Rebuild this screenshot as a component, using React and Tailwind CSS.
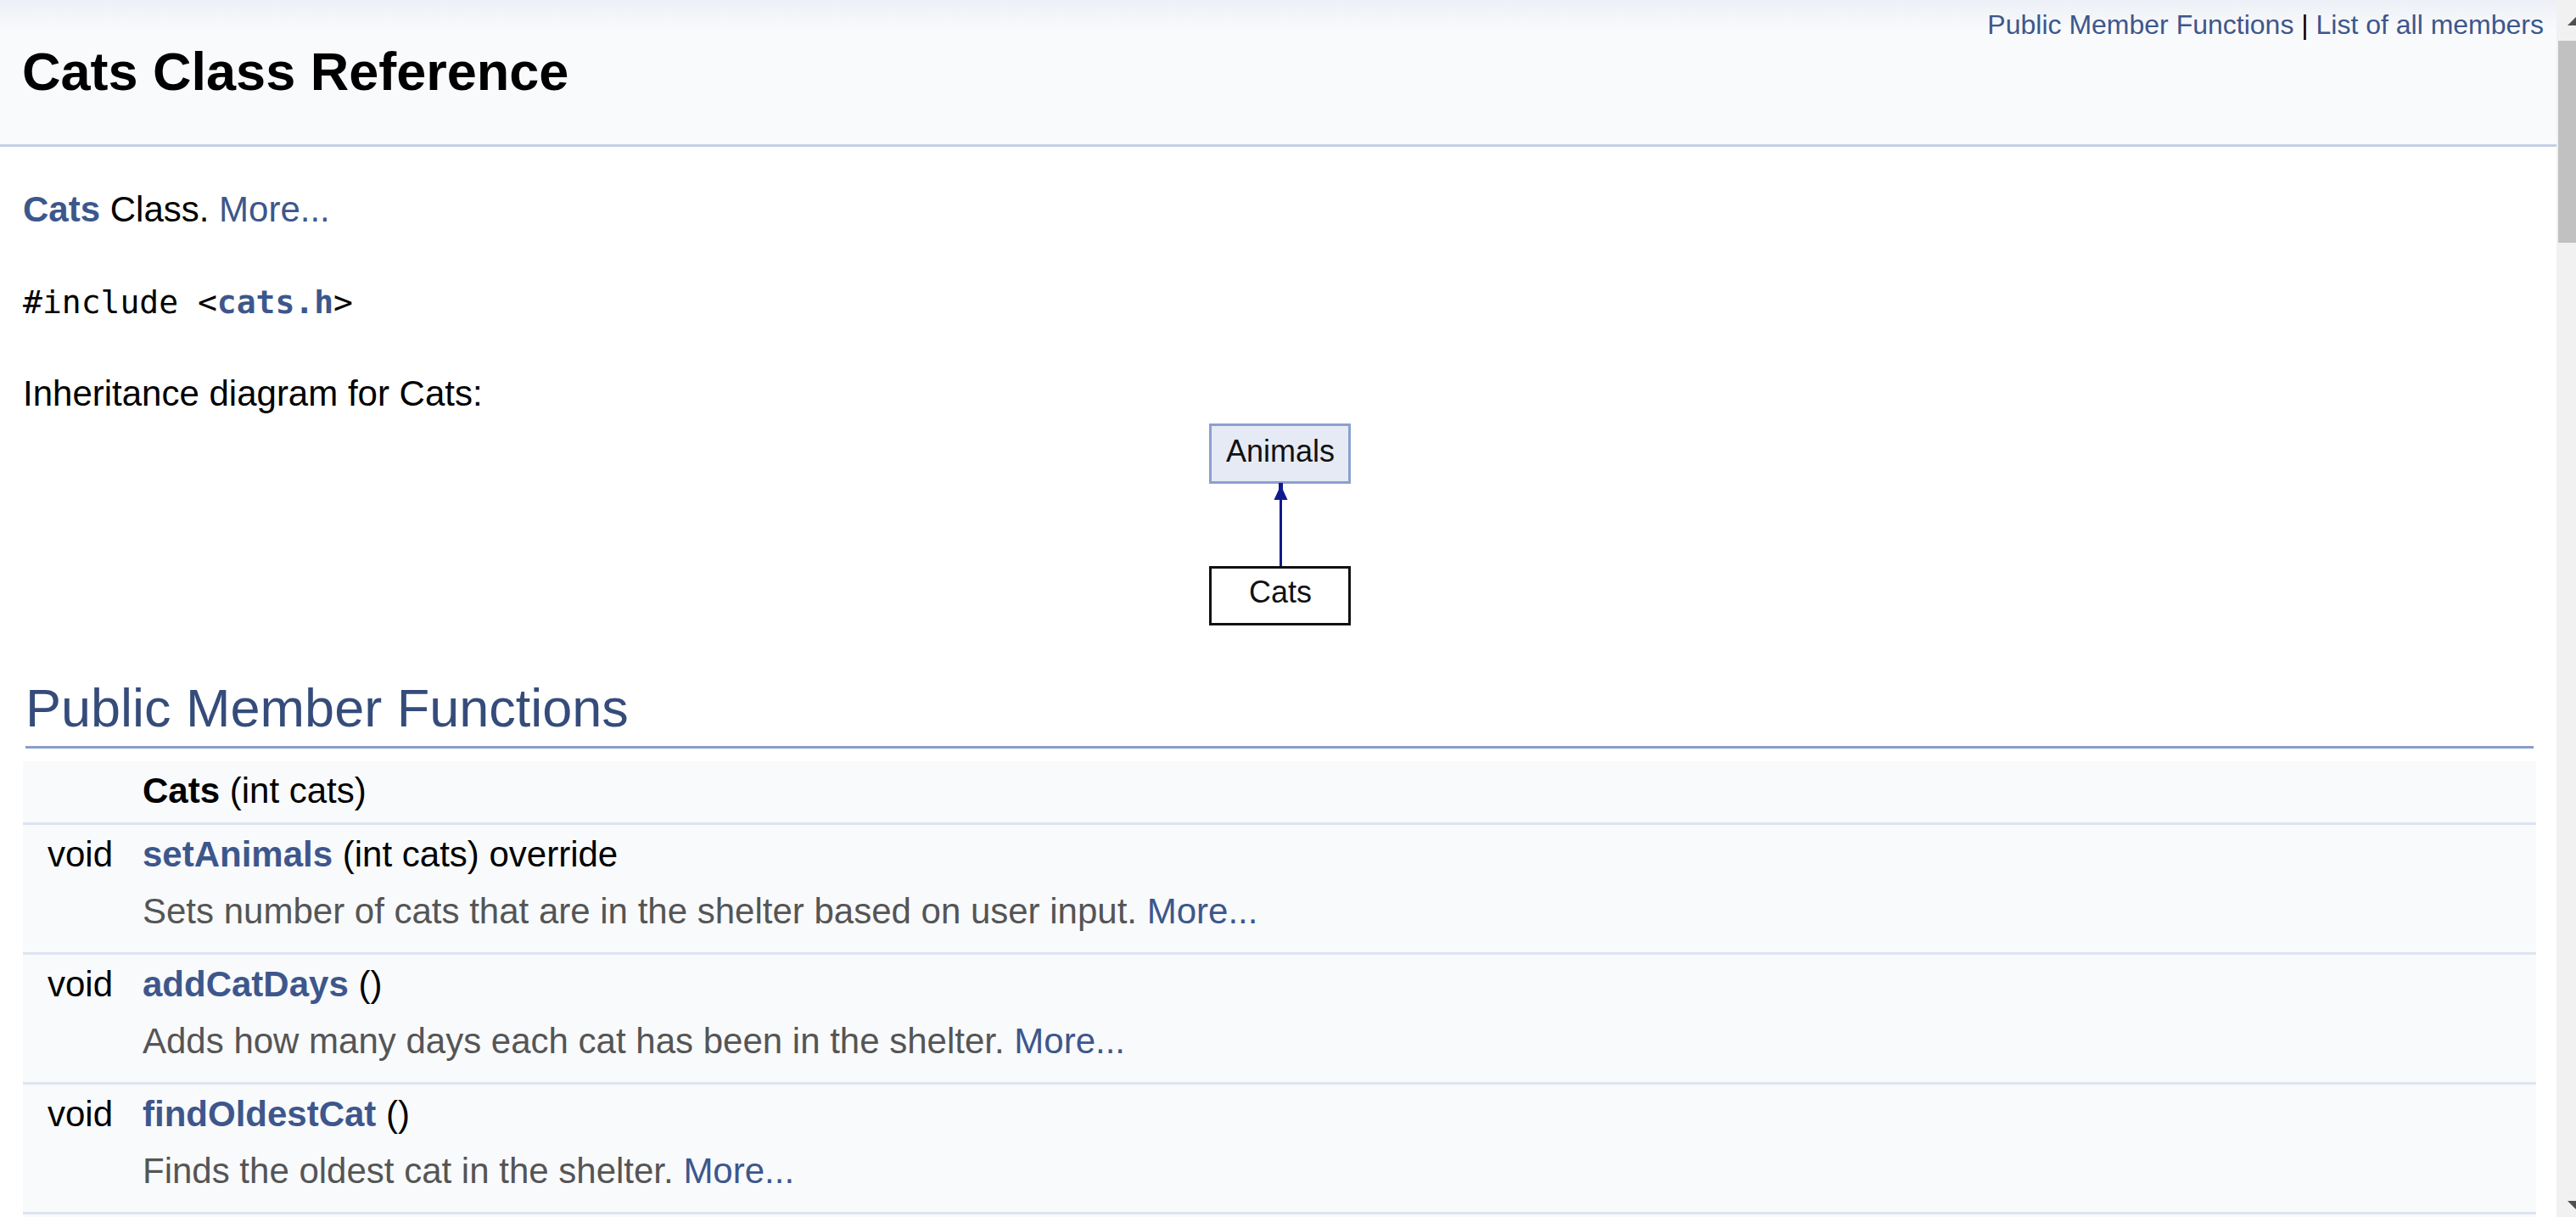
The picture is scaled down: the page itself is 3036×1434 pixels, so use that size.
const members = [
  {
    name: "setAnimals",
    args: " (int cats) override",
    desc: "Sets number of cats that are in the shelter based on user input.",
  },
  {
    name: "addCatDays",
    args: " ()",
    desc: "Adds how many days each cat has been in the shelter.",
  },
  {
    name: "findOldestCat",
    args: " ()",
    desc: "Finds the oldest cat in the shelter.",
  },
];

const link = "text-[#3d578c]";

const Separator = () => <div className="h-[3px] bg-[#dee4f0]"></div>;

const InheritanceDiagram = () => (
  <div className="flex justify-center">
    <svg width="200" height="250" viewBox="0 0 200 250">
      <rect x="18.5" y="3.5" width="164" height="68" fill="#e6eaf5" stroke="#8ca0cf" strokeWidth="3" />
      <text
        x="101"
        y="47"
        textAnchor="middle"
        fontFamily="'Liberation Sans', Arial, sans-serif"
        fontSize="36"
        fill="#111"
      >
        Animals
      </text>
      <line x1="101.5" y1="90" x2="101.5" y2="171" stroke="#111a8c" strokeWidth="3" />
      <polygon points="99,72 104,72 104,80 109.5,92 93.5,92 99,80" fill="#111a8c" />
      <rect x="18.5" y="171.5" width="164" height="67" fill="#fff" stroke="#111" strokeWidth="3" />
      <text
        x="101"
        y="213"
        textAnchor="middle"
        fontFamily="'Liberation Sans', Arial, sans-serif"
        fontSize="36"
        fill="#111"
      >
        Cats
      </text>
    </svg>
  </div>
);

const Scrollbar = () => (
  <div className="flex w-[23px] shrink-0 flex-col bg-[#f1f1f1]">
    <svg width="23" height="48" className="shrink-0">
      <polygon points="13,30 23,20 23,30" fill="#505050" />
    </svg>
    <div className="ml-[2px] h-[238px] shrink-0 bg-[#c1c1c1]"></div>
    <div className="flex-1"></div>
    <svg width="23" height="24" className="shrink-0">
      <polygon points="13,5 23,5 23,15" fill="#505050" />
    </svg>
  </div>
);

export default function App() {
  return (
    <div className="flex h-screen w-full overflow-hidden bg-white font-['Liberation_Sans',Arial,sans-serif] text-[42px] leading-[66px] text-black">
      <div className="min-w-0 flex-1">
        {/* header */}
        <div className="flow-root border-b-[3px] border-[#c4cfe5] bg-[#f9fafc] bg-[linear-gradient(to_bottom,#edf0f6_0px,#f9fafc_36px)]">
          <div className="float-right pr-[15px] text-right text-[32px] leading-[58px]">
            <a className={link}>Public Member Functions</a> | <a className={link}>List of all members</a>
          </div>
          <div className="pl-[26px] pt-[42px] pb-[44px]">
            <div className="text-[63px] font-bold leading-[84px]">Cats Class Reference</div>
          </div>
        </div>

        {/* contents */}
        <div className="pl-[27px] pr-[24px]">
          <p className="mt-[41px]">
            <a className={`${link} font-bold`}>Cats</a> Class. <a className={link}>More...</a>
          </p>
          <p className="mt-[42px]">
            <code className="font-['DejaVu_Sans_Mono',monospace] text-[38px]">
              #include &lt;<a className={`${link} font-bold`}>cats.h</a>&gt;
            </code>
          </p>
          <div className="mt-[42px]">Inheritance diagram for Cats:</div>
          <InheritanceDiagram />

          <h2 className="mx-[3px] mt-[27px] border-b-[3px] border-[#879ecb] pt-[24px] pb-[9px] text-[63px] font-normal leading-[72px] text-[#354c7b]">
            Public Member Functions
          </h2>

          <div className="mt-[15px]">
            <div className="grid h-[72px] grid-cols-[117px_1fr] bg-[#f9fafc] pt-[2px]">
              <div></div>
              <div className="pl-[24px]">
                <span className="font-bold">Cats</span> (int cats)
              </div>
            </div>
            <Separator />
            {members.map((m) => (
              <div key={m.name}>
                <div className="grid h-[69px] grid-cols-[117px_1fr] bg-[#f9fafc] pt-[2px]">
                  <div className="pr-[11px] text-right">void</div>
                  <div className="pl-[24px]">
                    <a className={`${link} font-bold`}>{m.name}</a>
                    {m.args}
                  </div>
                </div>
                <div className="grid h-[81px] grid-cols-[117px_1fr] bg-[#f9fafc] text-[#555]">
                  <div></div>
                  <div className="pl-[24px]">
                    {m.desc} <a className={link}>More...</a>
                  </div>
                </div>
                <Separator />
              </div>
            ))}
            <div className="h-[40px] bg-[#f9fafc]"></div>
          </div>
        </div>
      </div>
      <Scrollbar />
    </div>
  );
}
